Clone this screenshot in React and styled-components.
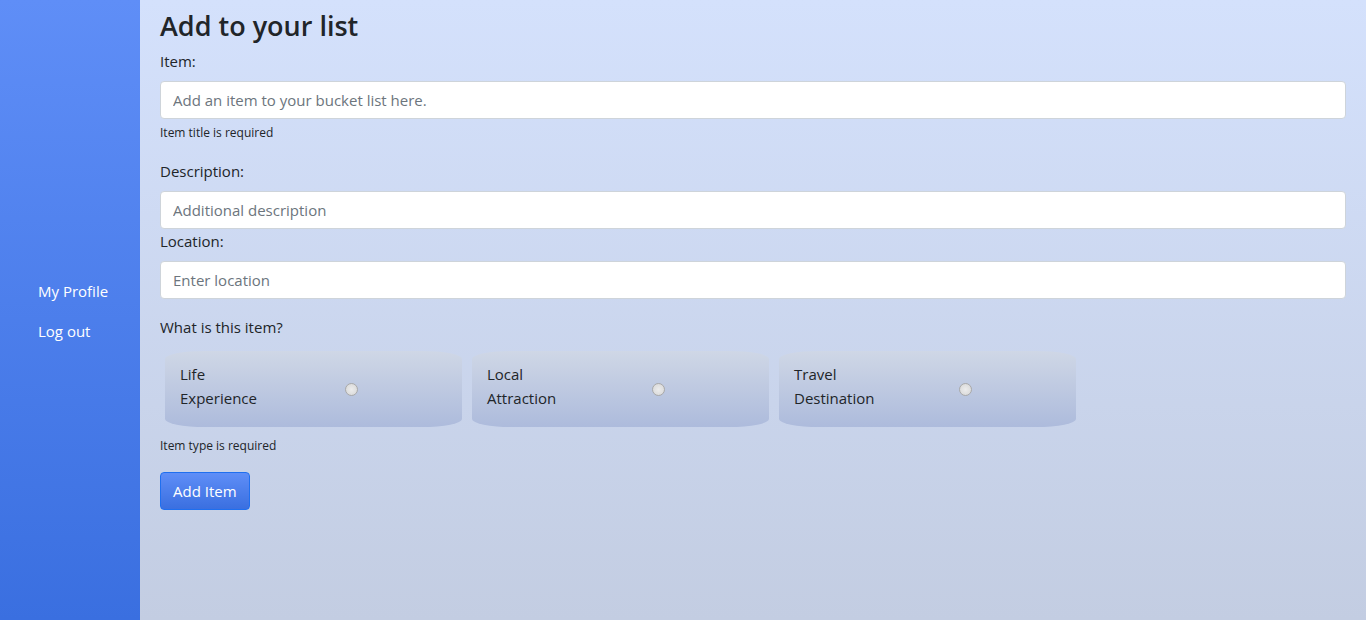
import styled, { createGlobalStyle } from "styled-components";

const GlobalStyle = createGlobalStyle`
  html, body {
    margin: 0;
    padding: 0;
  }
  body {
    font-family: "Open Sans", "Noto Sans", sans-serif;
    font-size: 15px;
    line-height: 24px;
    color: #212529;
  }
  * {
    box-sizing: border-box;
  }
`;

const types = [
  { id: "life", label: "Life Experience" },
  { id: "local", label: "Local Attraction" },
  { id: "travel", label: "Travel Destination" },
];

const App = () => {
  return (
    <>
      <GlobalStyle />
      <Layout>
        <Sidebar>
          <SideLink href="#">My Profile</SideLink>
          <SideLink href="#">Log out</SideLink>
        </Sidebar>
        <Main>
          <Title>Add to your list</Title>
          <Group>
            <Label htmlFor="item">Item:</Label>
            <Input id="item" placeholder="Add an item to your bucket list here." />
            <Error>Item title is required</Error>
          </Group>
          <Label htmlFor="desc">Description:</Label>
          <Input id="desc" placeholder="Additional description" />
          <Label htmlFor="loc">Location:</Label>
          <Input id="loc" placeholder="Enter location" />
          <Question>What is this item?</Question>
          <Cards>
            {types.map((t) => (
              <Card key={t.id}>
                <CardText>{t.label}</CardText>
                <Radio type="radio" name="type" value={t.id} />
              </Card>
            ))}
          </Cards>
          <Error>Item type is required</Error>
          <Button type="button">Add Item</Button>
        </Main>
      </Layout>
    </>
  );
};

const Layout = styled.div`
  display: flex;
  min-height: 620px;
`;

const Sidebar = styled.nav`
  width: 140px;
  flex-shrink: 0;
  background: linear-gradient(to bottom, #5f8ef7, #3a6fe0);
  display: flex;
  flex-direction: column;
  justify-content: center;
  gap: 16px;
  padding: 2px 0 0 38px;
`;

const SideLink = styled.a`
  color: #fff;
  text-decoration: none;
  font-size: 15px;
  line-height: 24px;
`;

const Main = styled.main`
  flex: 1;
  background: linear-gradient(to bottom, #d4e1fc, #c3cde2);
  padding: 7px 20px 20px 20px;
  display: flex;
  flex-direction: column;
  align-items: flex-start;
`;

const Title = styled.h2`
  margin: 0 0 4px;
  font-size: 27px;
  line-height: 38px;
  font-weight: 600;
`;

const Group = styled.div`
  width: 100%;
  margin-bottom: 17px;
  display: flex;
  flex-direction: column;
  align-items: flex-start;
`;

const Label = styled.label`
  display: block;
  margin-bottom: 8px;
`;

const Input = styled.input`
  width: 100%;
  height: 38px;
  padding: 6px 12px;
  font: inherit;
  font-size: 15px;
  color: #495057;
  background: #fff;
  border: 1px solid #ced4da;
  border-radius: 4px;
  outline: none;

  &::placeholder {
    color: #6c757d;
  }
`;

const Error = styled.div`
  margin-top: 4px;
  font-size: 12px;
  line-height: 19px;
`;

const Question = styled.div`
  margin-top: 16px;
`;

const Cards = styled.div`
  display: flex;
  gap: 10px;
  margin: 12px 0 5px 5px;
`;

const Card = styled.label`
  width: 297px;
  height: 76px;
  display: flex;
  align-items: center;
  padding: 0 15px;
  border-radius: 40px / 8px;
  background: linear-gradient(to bottom, #cfd7e6, #adbbdc);
`;

const CardText = styled.span`
  width: 90px;
  margin: 0 75px 6px 0;
`;

const Radio = styled.input`
  appearance: none;
  width: 13px;
  height: 13px;
  margin: 0;
  border-radius: 50%;
  border: 1px solid #a9a9a9;
  background: radial-gradient(circle, #ececec, #d6d6d6);
`;

const Button = styled.button`
  margin-top: 17px;
  height: 38px;
  padding: 0 12px;
  font: inherit;
  font-size: 15px;
  color: #fff;
  background: linear-gradient(to bottom, #5f8ef7, #3a6fe0);
  border: 1px solid #1f6fef;
  border-radius: 4px;
  cursor: pointer;
`;

export default App;
